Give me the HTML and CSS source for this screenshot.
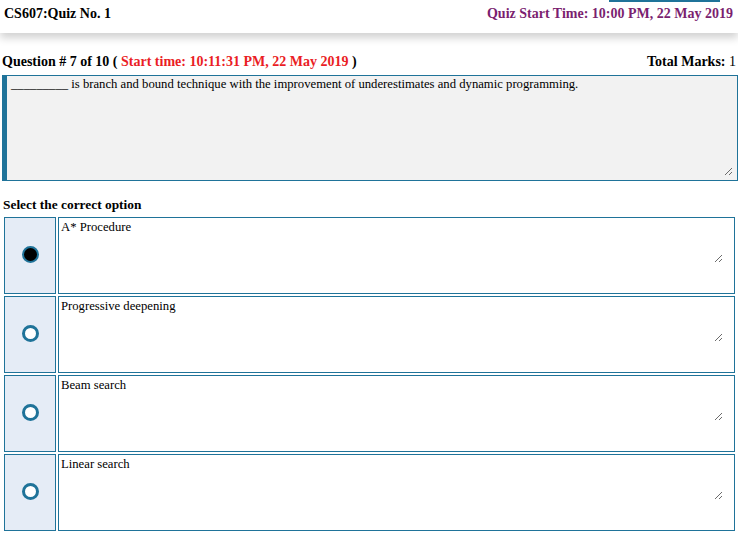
FILE: index.html
```html
<!DOCTYPE html>
<html lang="en">
<head>
    <meta charset="UTF-8">
    <title>CS607 Quiz</title>
    <link rel="stylesheet" href="styles.css">
</head>
<body>
    <div class="top-bar">
        <span class="course">CS607:Quiz No. 1</span>
        <span class="quiz-start">Quiz Start Time: 10:00 PM, 22 May 2019</span>
        <div class="top-tab"></div>
    </div>

    <div class="question-head">
        <span>Question # 7 of 10 ( <span class="start-time">Start time: 10:11:31 PM, 22 May 2019</span> )</span>
        <span>Total Marks: <span class="marks">1</span></span>
    </div>
    <div class="question-text">
        _________ is branch and bound technique with the improvement of underestimates and dynamic programming.
        <svg class="grip q-grip" width="9" height="9" viewBox="0 0 9 9"><path d="M1 8 L8 1 M5 8 L8 5" stroke="#6b6b6b" stroke-width="1" fill="none"/></svg>
    </div>

    <div class="select-title">Select the correct option</div>

    <div class="options">
        <div class="option">
            <div class="radio-cell"><span class="radio checked"></span></div>
            <div class="answer">A* Procedure
                <svg class="grip" width="9" height="9" viewBox="0 0 9 9"><path d="M1 8 L8 1 M5 8 L8 5" stroke="#6b6b6b" stroke-width="1" fill="none"/></svg>
            </div>
        </div>
        <div class="option">
            <div class="radio-cell"><span class="radio"></span></div>
            <div class="answer">Progressive deepening
                <svg class="grip" width="9" height="9" viewBox="0 0 9 9"><path d="M1 8 L8 1 M5 8 L8 5" stroke="#6b6b6b" stroke-width="1" fill="none"/></svg>
            </div>
        </div>
        <div class="option">
            <div class="radio-cell"><span class="radio"></span></div>
            <div class="answer">Beam search
                <svg class="grip" width="9" height="9" viewBox="0 0 9 9"><path d="M1 8 L8 1 M5 8 L8 5" stroke="#6b6b6b" stroke-width="1" fill="none"/></svg>
            </div>
        </div>
        <div class="option">
            <div class="radio-cell"><span class="radio"></span></div>
            <div class="answer">Linear search
                <svg class="grip" width="9" height="9" viewBox="0 0 9 9"><path d="M1 8 L8 1 M5 8 L8 5" stroke="#6b6b6b" stroke-width="1" fill="none"/></svg>
            </div>
        </div>
    </div>
</body>
</html>
```

FILE: styles.css
```css
body {
    margin: 0;
    background: #ffffff;
    color: #000000;
    font-family: "Liberation Serif", "Times New Roman", serif;
    overflow: hidden;
}

.top-bar {
    position: relative;
    height: 33px;
    display: flex;
    justify-content: space-between;
    align-items: center;
    padding: 0 5px 0 4px;
    font-size: 14px;
    font-weight: bold;
    background: #ffffff;
    box-shadow: 0 5px 8px rgba(0, 0, 0, 0.18);
}

.top-bar span {
    margin-top: -6px;
}

.quiz-start {
    color: #7b1f70;
}

/* kraj vkladki sverhu */
.top-tab {
    position: absolute;
    top: 0;
    right: 18px;
    width: 111px;
    height: 2px;
    background: #1f7399;
}

.question-head {
    display: flex;
    justify-content: space-between;
    padding: 21px 2px 0 2px;
    font-size: 14px;
    font-weight: bold;
    line-height: 16px;
}

.start-time {
    color: #ea1d25;
}

.marks {
    font-weight: normal;
}

.question-text {
    position: relative;
    box-sizing: border-box;
    width: 736px;
    height: 106px;
    margin: 5px 0 0 2px;
    padding: 1px 4px;
    background: #f2f2f2;
    border: 1px solid #1f7399;
    border-left: 5px solid #1f7399;
    font-size: 12.7px;
    line-height: 15px;
}

.grip {
    position: absolute;
    right: 11px;
    bottom: 30px;
}

.q-grip {
    right: 4px;
    bottom: 4px;
}

.select-title {
    padding: 16px 0 0 3px;
    font-size: 13.4px;
    font-weight: bold;
    line-height: 16px;
}

.options {
    display: flex;
    flex-direction: column;
    gap: 2px;
    padding: 4px 0 0 4px;
}

.option {
    display: flex;
    gap: 2px;
    height: 77px;
}

.radio-cell {
    box-sizing: border-box;
    width: 52px;
    display: flex;
    justify-content: center;
    align-items: center;
    background: #e5ecf6;
    border: 1px solid #1f7399;
}

.radio {
    box-sizing: border-box;
    width: 17px;
    height: 17px;
    margin-top: -2px;
    border-radius: 50%;
    border: 3.5px solid #1f7399;
    background: #ffffff;
}

.radio.checked {
    border-width: 2.5px;
    background: #000000;
}

.answer {
    position: relative;
    box-sizing: border-box;
    width: 677px;
    height: 77px;
    padding: 2px 2px;
    border: 1px solid #1f7399;
    background: #ffffff;
    font-size: 12.7px;
    line-height: 15px;
}
```
